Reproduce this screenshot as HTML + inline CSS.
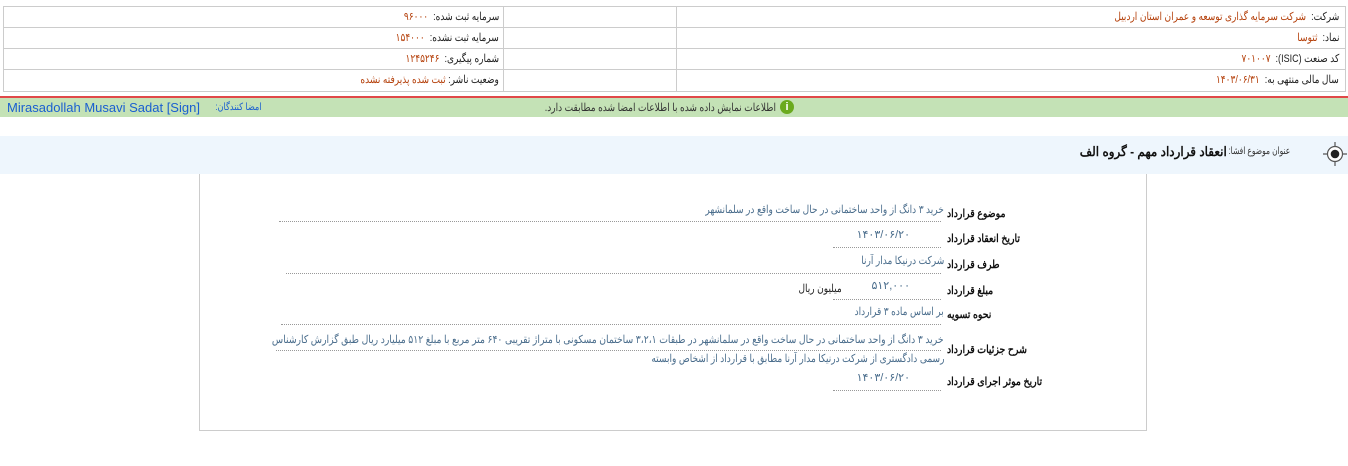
<!DOCTYPE html>
<html><head><meta charset="utf-8"><style>
body{margin:0;width:1348px;height:466px;background:#fff;font-family:"Liberation Sans","Noto Sans CJK SC",sans-serif;font-size:11px;color:#222;position:relative;overflow:hidden}
.a{position:absolute;white-space:nowrap}
.r{direction:rtl;text-align:right;transform:scaleX(0.82);transform-origin:right center}
.L{transform:scaleX(0.85);transform-origin:left center}
.red{color:#b5410c}
.v{color:#4a6d8c}
.b{font-weight:bold;color:#111}
.dl{position:absolute;border-bottom:1px dotted #999;height:0}
</style></head><body>
<div class="a" style="left:3px;top:6px;width:1341px;height:84px;border:1px solid #ccc"></div>
<div class="a" style="left:3px;top:27px;width:1343px;border-top:1px solid #ccc"></div>
<div class="a" style="left:3px;top:48px;width:1343px;border-top:1px solid #ccc"></div>
<div class="a" style="left:3px;top:69px;width:1343px;border-top:1px solid #ccc"></div>
<div class="a" style="left:503px;top:6px;height:85px;border-left:1px solid #ccc"></div>
<div class="a" style="left:676px;top:6px;height:85px;border-left:1px solid #ccc"></div>

<div class="a r" style="right:9px;top:10px">شرکت: &nbsp;<span class="red">شرکت سرمایه گذاری توسعه و عمران استان اردبیل</span></div>
<div class="a r" style="right:9px;top:31px">نماد: &nbsp;<span class="red">ثتوسا</span></div>
<div class="a r" style="right:9px;top:52px">کد صنعت (ISIC): &nbsp;<span class="red">۷۰۱۰۰۷</span></div>
<div class="a r" style="right:9px;top:73px">سال مالی منتهی به: &nbsp;<span class="red">۱۴۰۳/۰۶/۳۱</span></div>

<div class="a r" style="right:849px;top:10px">سرمایه ثبت شده: &nbsp;<span class="red">۹۶۰۰۰</span></div>
<div class="a r" style="right:849px;top:31px">سرمایه ثبت نشده: &nbsp;<span class="red">۱۵۴۰۰۰</span></div>
<div class="a r" style="right:849px;top:52px">شماره پیگیری: &nbsp;<span class="red">۱۲۴۵۲۴۶</span></div>
<div class="a r" style="right:849px;top:73px">وضعیت ناشر: <span class="red">ثبت شده پذیرفته نشده</span></div>

<div class="a" style="left:0;top:96px;width:1348px;height:2px;background:#e04848"></div>
<div class="a" style="left:0;top:98px;width:1348px;height:19px;background:#c4e2b6"></div>
<div class="a r" style="right:572px;top:101px;color:#333">اطلاعات نمایش داده شده با اطلاعات امضا شده مطابقت دارد.</div>
<div class="a" style="left:780px;top:100px;width:14px;height:14px;border-radius:50%;background:#6aaa1e;color:#fff;font-weight:bold;font-size:11px;text-align:center;line-height:14px">i</div>
<div class="a" style="left:7px;top:100px;font-size:13px;color:#1a5fd0">Mirasadollah Musavi Sadat [Sign]</div>
<div class="a r" style="right:1086px;top:102px;font-size:10px;color:#1a5fd0">امضا کنندگان:</div>

<div class="a" style="left:0;top:136px;width:1348px;height:38px;background:#eef6fd"></div>
<div class="a" style="right:58px;top:146px;font-size:10px;color:#333;direction:rtl;transform:scaleX(0.75);transform-origin:right center">عنوان موضوع افشا:</div>
<div class="a" style="right:121px;top:144px;font-size:13px;font-weight:bold;color:#111;direction:rtl;transform:scaleX(0.92);transform-origin:right center">انعقاد قرارداد مهم - گروه الف</div>
<svg class="a" style="left:1322px;top:141px" width="26" height="26" viewBox="0 0 26 26">
<circle cx="13" cy="13" r="7.5" fill="#fff" stroke="#555" stroke-width="1.2"/>
<circle cx="13" cy="13" r="4.3" fill="#222"/>
<path d="M13 1v4.5M13 20.5V25M1 13h4.5M20.5 13H25" stroke="#555" stroke-width="1.2"/>
</svg>

<div class="a" style="left:199px;top:174px;width:946px;height:256px;border:1px solid #ccc;border-top:none"></div>

<div class="a b L" style="left:947px;top:207px;direction:rtl">موضوع قرارداد</div>
<div class="a r v" style="right:404px;top:203px">خرید ۳ دانگ از واحد ساختمانی در حال ساخت واقع در سلمانشهر</div>
<div class="dl" style="left:279px;top:221px;width:662px"></div>

<div class="a b L" style="left:947px;top:232px;direction:rtl">تاریخ انعقاد قرارداد</div>
<div class="a v" style="right:438px;top:228px;direction:rtl">۱۴۰۳/۰۶/۲۰</div>
<div class="dl" style="left:833px;top:247px;width:108px"></div>

<div class="a b L" style="left:947px;top:258px;direction:rtl">طرف قرارداد</div>
<div class="a r v" style="right:404px;top:254px">شرکت درنیکا مدار آرنا</div>
<div class="dl" style="left:286px;top:273px;width:655px"></div>

<div class="a b L" style="left:947px;top:284px;direction:rtl">مبلغ قرارداد</div>
<div class="a v" style="right:438px;top:279px;direction:rtl">۵۱۲,۰۰۰</div>
<div class="a r" style="right:506px;top:282px;color:#222">میلیون ریال</div>
<div class="dl" style="left:833px;top:299px;width:108px"></div>

<div class="a b L" style="left:947px;top:308px;direction:rtl">نحوه تسویه</div>
<div class="a r v" style="right:404px;top:305px">بر اساس ماده ۳ قرارداد</div>
<div class="dl" style="left:281px;top:324px;width:660px"></div>

<div class="a b L" style="left:947px;top:343px;direction:rtl">شرح جزئیات قرارداد</div>
<div class="a v" style="right:404px;top:333px;direction:rtl;transform:scaleX(0.84);transform-origin:right center">خرید ۳ دانگ از واحد ساختمانی در حال ساخت واقع در سلمانشهر در طبقات ۳،۲،۱ ساختمان مسکونی با متراژ تقریبی ۶۴۰ متر مربع با مبلغ ۵۱۲ میلیارد ریال طبق گزارش کارشناس</div>
<div class="dl" style="left:276px;top:350px;width:665px"></div>
<div class="a r v" style="right:404px;top:352px">رسمی دادگستری از شرکت درنیکا مدار آرنا مطابق با قرارداد از اشخاص وابسته</div>

<div class="a b L" style="left:947px;top:375px;direction:rtl">تاریخ موثر اجرای قرارداد</div>
<div class="a v" style="right:438px;top:371px;direction:rtl">۱۴۰۳/۰۶/۲۰</div>
<div class="dl" style="left:833px;top:390px;width:108px"></div>
</body></html>
